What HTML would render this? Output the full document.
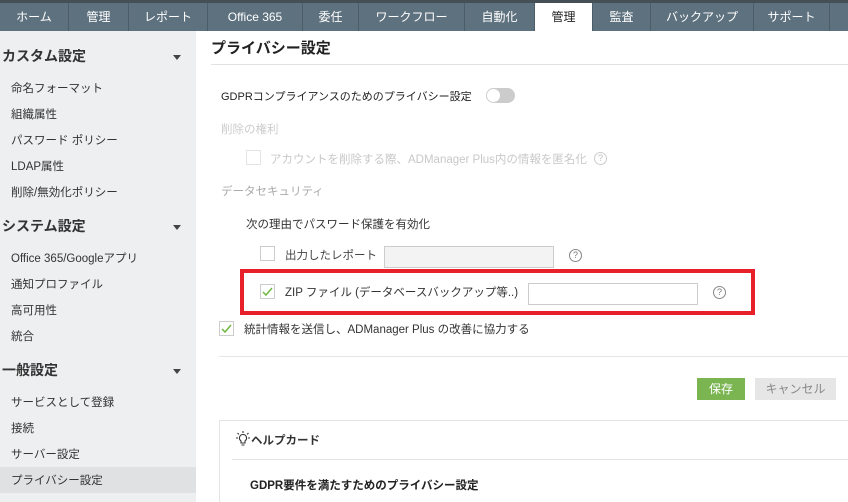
<!DOCTYPE html>
<html><head><meta charset="utf-8"><style>
*{margin:0;padding:0;box-sizing:border-box}
html{width:848px;height:502px;overflow:hidden}
body{width:848px;height:502px;overflow:hidden;background:#fff;font-family:"Liberation Sans","Noto Sans CJK JP",sans-serif;color:#222;position:relative}
.a{position:absolute;white-space:nowrap}
#top{position:absolute;left:0;top:0;width:848px;height:31px;background:#5e717e;border-top:3px solid #454f56}
.tab{position:absolute;top:3px;height:28px;line-height:28px;text-align:center;color:#fff;font-size:12px;border-right:1px solid #4d5d68}
#side{position:absolute;left:0;top:31px;width:196px;height:471px;background:#edeff0}
.h{font-size:14px;font-weight:bold;color:#333}
.it{font-size:11.5px;color:#333}
.tri{position:absolute;left:173px;width:0;height:0;border-left:4px solid transparent;border-right:4px solid transparent;border-top:5px solid #444}
.cb{position:absolute;width:15px;height:15px;border:1px solid #ccc;background:#fff}
.q{position:absolute;width:13px;height:13px;border:1px solid #888;border-radius:50%;font-size:9px;line-height:11px;text-align:center;color:#777}
.m{font-size:11.5px}
</style></head><body>
<div id="top"></div>
<div class="tab" style="left:0;width:69px">ホーム</div>
<div class="tab" style="left:69px;width:60px">管理</div>
<div class="tab" style="left:129px;width:79px">レポート</div>
<div class="tab" style="left:208px;width:95px">Office 365</div>
<div class="tab" style="left:303px;width:56px">委任</div>
<div class="tab" style="left:359px;width:106px">ワークフロー</div>
<div class="tab" style="left:465px;width:70px">自動化</div>
<div class="tab" style="left:535px;width:58px;background:#fff;color:#222">管理</div>
<div class="tab" style="left:593px;width:58px">監査</div>
<div class="tab" style="left:651px;width:103px">バックアップ</div>
<div class="tab" style="left:754px;width:76px">サポート</div>

<div id="side"></div>
<div class="a" style="left:0;top:467px;width:196px;height:26px;background:#e0e1e2"></div>
<div class="a h" style="left:2px;top:46px">カスタム設定</div><div class="tri" style="top:55px"></div>
<div class="a it" style="left:11px;top:80px">命名フォーマット</div>
<div class="a it" style="left:11px;top:106px">組織属性</div>
<div class="a it" style="left:11px;top:132px">パスワード ポリシー</div>
<div class="a it" style="left:11px;top:158px">LDAP属性</div>
<div class="a it" style="left:11px;top:184px">削除/無効化ポリシー</div>
<div class="a h" style="left:2px;top:216px">システム設定</div><div class="tri" style="top:225px"></div>
<div class="a it" style="left:11px;top:250px">Office 365/Googleアプリ</div>
<div class="a it" style="left:11px;top:276px">通知プロファイル</div>
<div class="a it" style="left:11px;top:302px">高可用性</div>
<div class="a it" style="left:11px;top:328px">統合</div>
<div class="a h" style="left:2px;top:360px">一般設定</div><div class="tri" style="top:369px"></div>
<div class="a it" style="left:11px;top:394px">サービスとして登録</div>
<div class="a it" style="left:11px;top:420px">接続</div>
<div class="a it" style="left:11px;top:446px">サーバー設定</div>
<div class="a it" style="left:11px;top:472px">プライバシー設定</div>

<div class="a" style="left:211px;top:37px;font-size:15px;font-weight:bold;color:#222">プライバシー設定</div>
<div class="a" style="left:211px;top:64px;width:637px;height:1px;background:#e2e2e2"></div>

<div class="a m" style="left:221px;top:88px;color:#222;font-size:11px">GDPRコンプライアンスのためのプライバシー設定</div>
<div class="a" style="left:486px;top:88px;width:29px;height:15px;border-radius:8px;background:#ccc"></div>
<div class="a" style="left:487px;top:89px;width:13px;height:13px;border-radius:50%;background:#fff"></div>
<div class="a m" style="left:221px;top:121px;color:#ccc">削除の権利</div>
<div class="cb" style="left:246px;top:150px;border-color:#e4e4e4"></div>
<div class="a m" style="left:270px;top:151px;color:#c8c8c8">アカウントを削除する際、ADManager Plus内の情報を匿名化</div>
<div class="q" style="left:594px;top:152px;border-color:#ccc;color:#bbb">?</div>
<div class="a m" style="left:221px;top:183px;color:#aaa">データセキュリティ</div>
<div class="a m" style="left:246px;top:216px;color:#333">次の理由でパスワード保護を有効化</div>
<div class="cb" style="left:260px;top:246px"></div>
<div class="a m" style="left:285px;top:247px;color:#444">出力したレポート</div>
<div class="a" style="left:384px;top:246px;width:170px;height:22px;border:1px solid #ccc;background:#f3f3f3"></div>
<div class="q" style="left:569px;top:249px">?</div>

<div class="a" style="left:240px;top:269px;width:515px;height:46px;border:4px solid #e8202a"></div>
<div class="cb" style="left:260px;top:284px"><svg width="13" height="13" viewBox="0 0 13 13"><path d="M2 7l3 3 6-7" fill="none" stroke="#6fb840" stroke-width="1.5"/></svg></div>
<div class="a m" style="left:285px;top:284px;color:#333">ZIP ファイル (データベースバックアップ等..)</div>
<div class="a" style="left:528px;top:283px;width:170px;height:22px;border:1px solid #ccc;background:#fff"></div>
<div class="q" style="left:713px;top:286px">?</div>

<div class="cb" style="left:219px;top:321px"><svg width="13" height="13" viewBox="0 0 13 13"><path d="M2 7l3 3 6-7" fill="none" stroke="#6fb840" stroke-width="1.5"/></svg></div>
<div class="a m" style="left:244px;top:321px;color:#333">統計情報を送信し、ADManager Plus の改善に協力する</div>
<div class="a" style="left:219px;top:356px;width:629px;height:1px;background:#e6e6e6"></div>

<div class="a" style="left:697px;top:378px;width:48px;height:22px;background:#7ab552;color:#fff;font-size:12px;line-height:22px;text-align:center">保存</div>
<div class="a" style="left:755px;top:378px;width:81px;height:22px;background:#e6e6e6;color:#888;font-size:12px;line-height:22px;text-align:center">キャンセル</div>

<div class="a" style="left:219px;top:420px;width:640px;height:90px;border:1px solid #e4e4e4"></div>
<svg class="a" style="left:234px;top:430px" width="18" height="18" viewBox="0 0 18 18" fill="none" stroke="#333" stroke-width="1.1"><path d="M9 4.5a3.5 3.5 0 0 0-2 6.4V13h4v-2.1A3.5 3.5 0 0 0 9 4.5zM7.5 15h3M9 1v2M2 8h2M14 8h2M3.5 3l1.4 1.4M14.5 3l-1.4 1.4"/></svg>
<div class="a m" style="left:251px;top:432px;font-weight:bold;color:#333">ヘルプカード</div>
<div class="a" style="left:232px;top:459px;width:616px;height:1px;background:#e4e4e4"></div>
<div class="a m" style="left:250px;top:477px;font-weight:bold;color:#222">GDPR要件を満たすためのプライバシー設定</div>
</body></html>
